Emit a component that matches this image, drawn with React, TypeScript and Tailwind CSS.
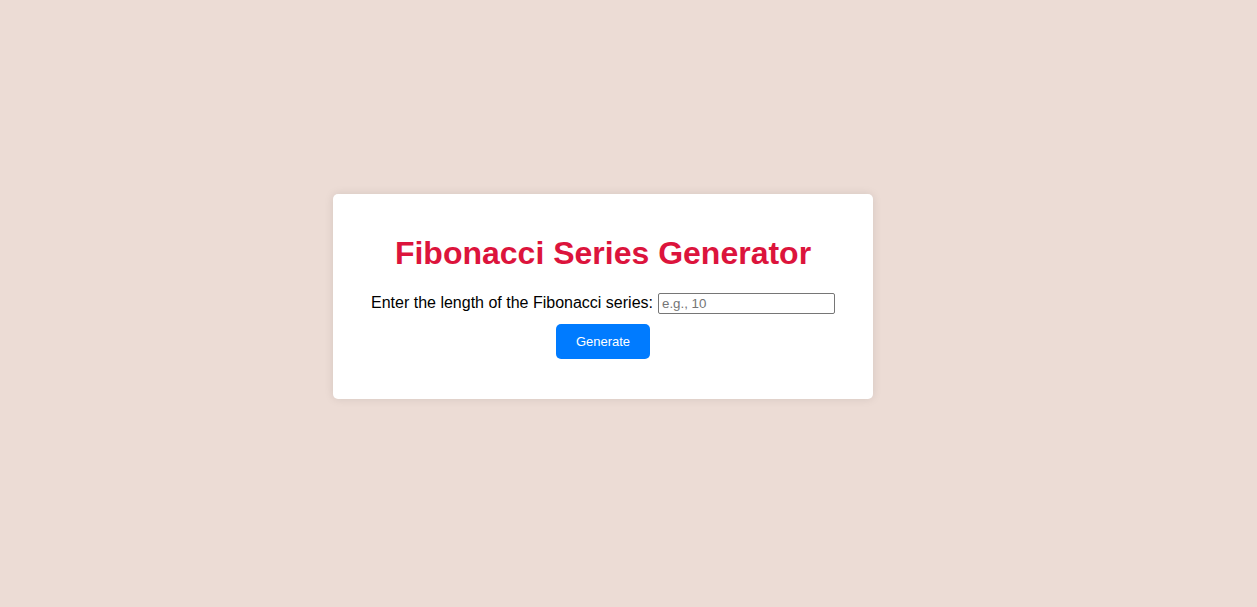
import React from 'react';

const App: React.FC = () => {
  return (
    <div
      className="min-h-screen flex items-center justify-center bg-[#ecdcd5] pb-[14px] pr-[51px]"
      style={{ fontFamily: '"Liberation Sans", Arial, sans-serif' }}
    >
      <div className="w-[540px] bg-white rounded-[5px] shadow-[0_0_10px_rgba(0,0,0,0.1)] px-5 pt-5 pb-10 text-center">
        <h1 className="text-[32px] leading-[37px] font-bold text-[#dc143c] mt-[21px] mb-[19px]">
          Fibonacci Series Generator
        </h1>
        <div className="flex items-center justify-center text-[16px] text-black">
          <label htmlFor="len">Enter the length of the Fibonacci series:</label>
          <input
            id="len"
            type="number"
            placeholder="e.g., 10"
            className="ml-[5px] w-[177px] h-[21px] border border-[#767676] rounded-[2px] px-[3px] text-[13.33px] placeholder:text-[#757575] outline-none"
          />
        </div>
        <button className="mt-[9px] h-[35px] px-5 bg-[#007bff] text-white text-[13px] rounded-[5px]">
          Generate
        </button>
      </div>
    </div>
  );
};

export default App;
